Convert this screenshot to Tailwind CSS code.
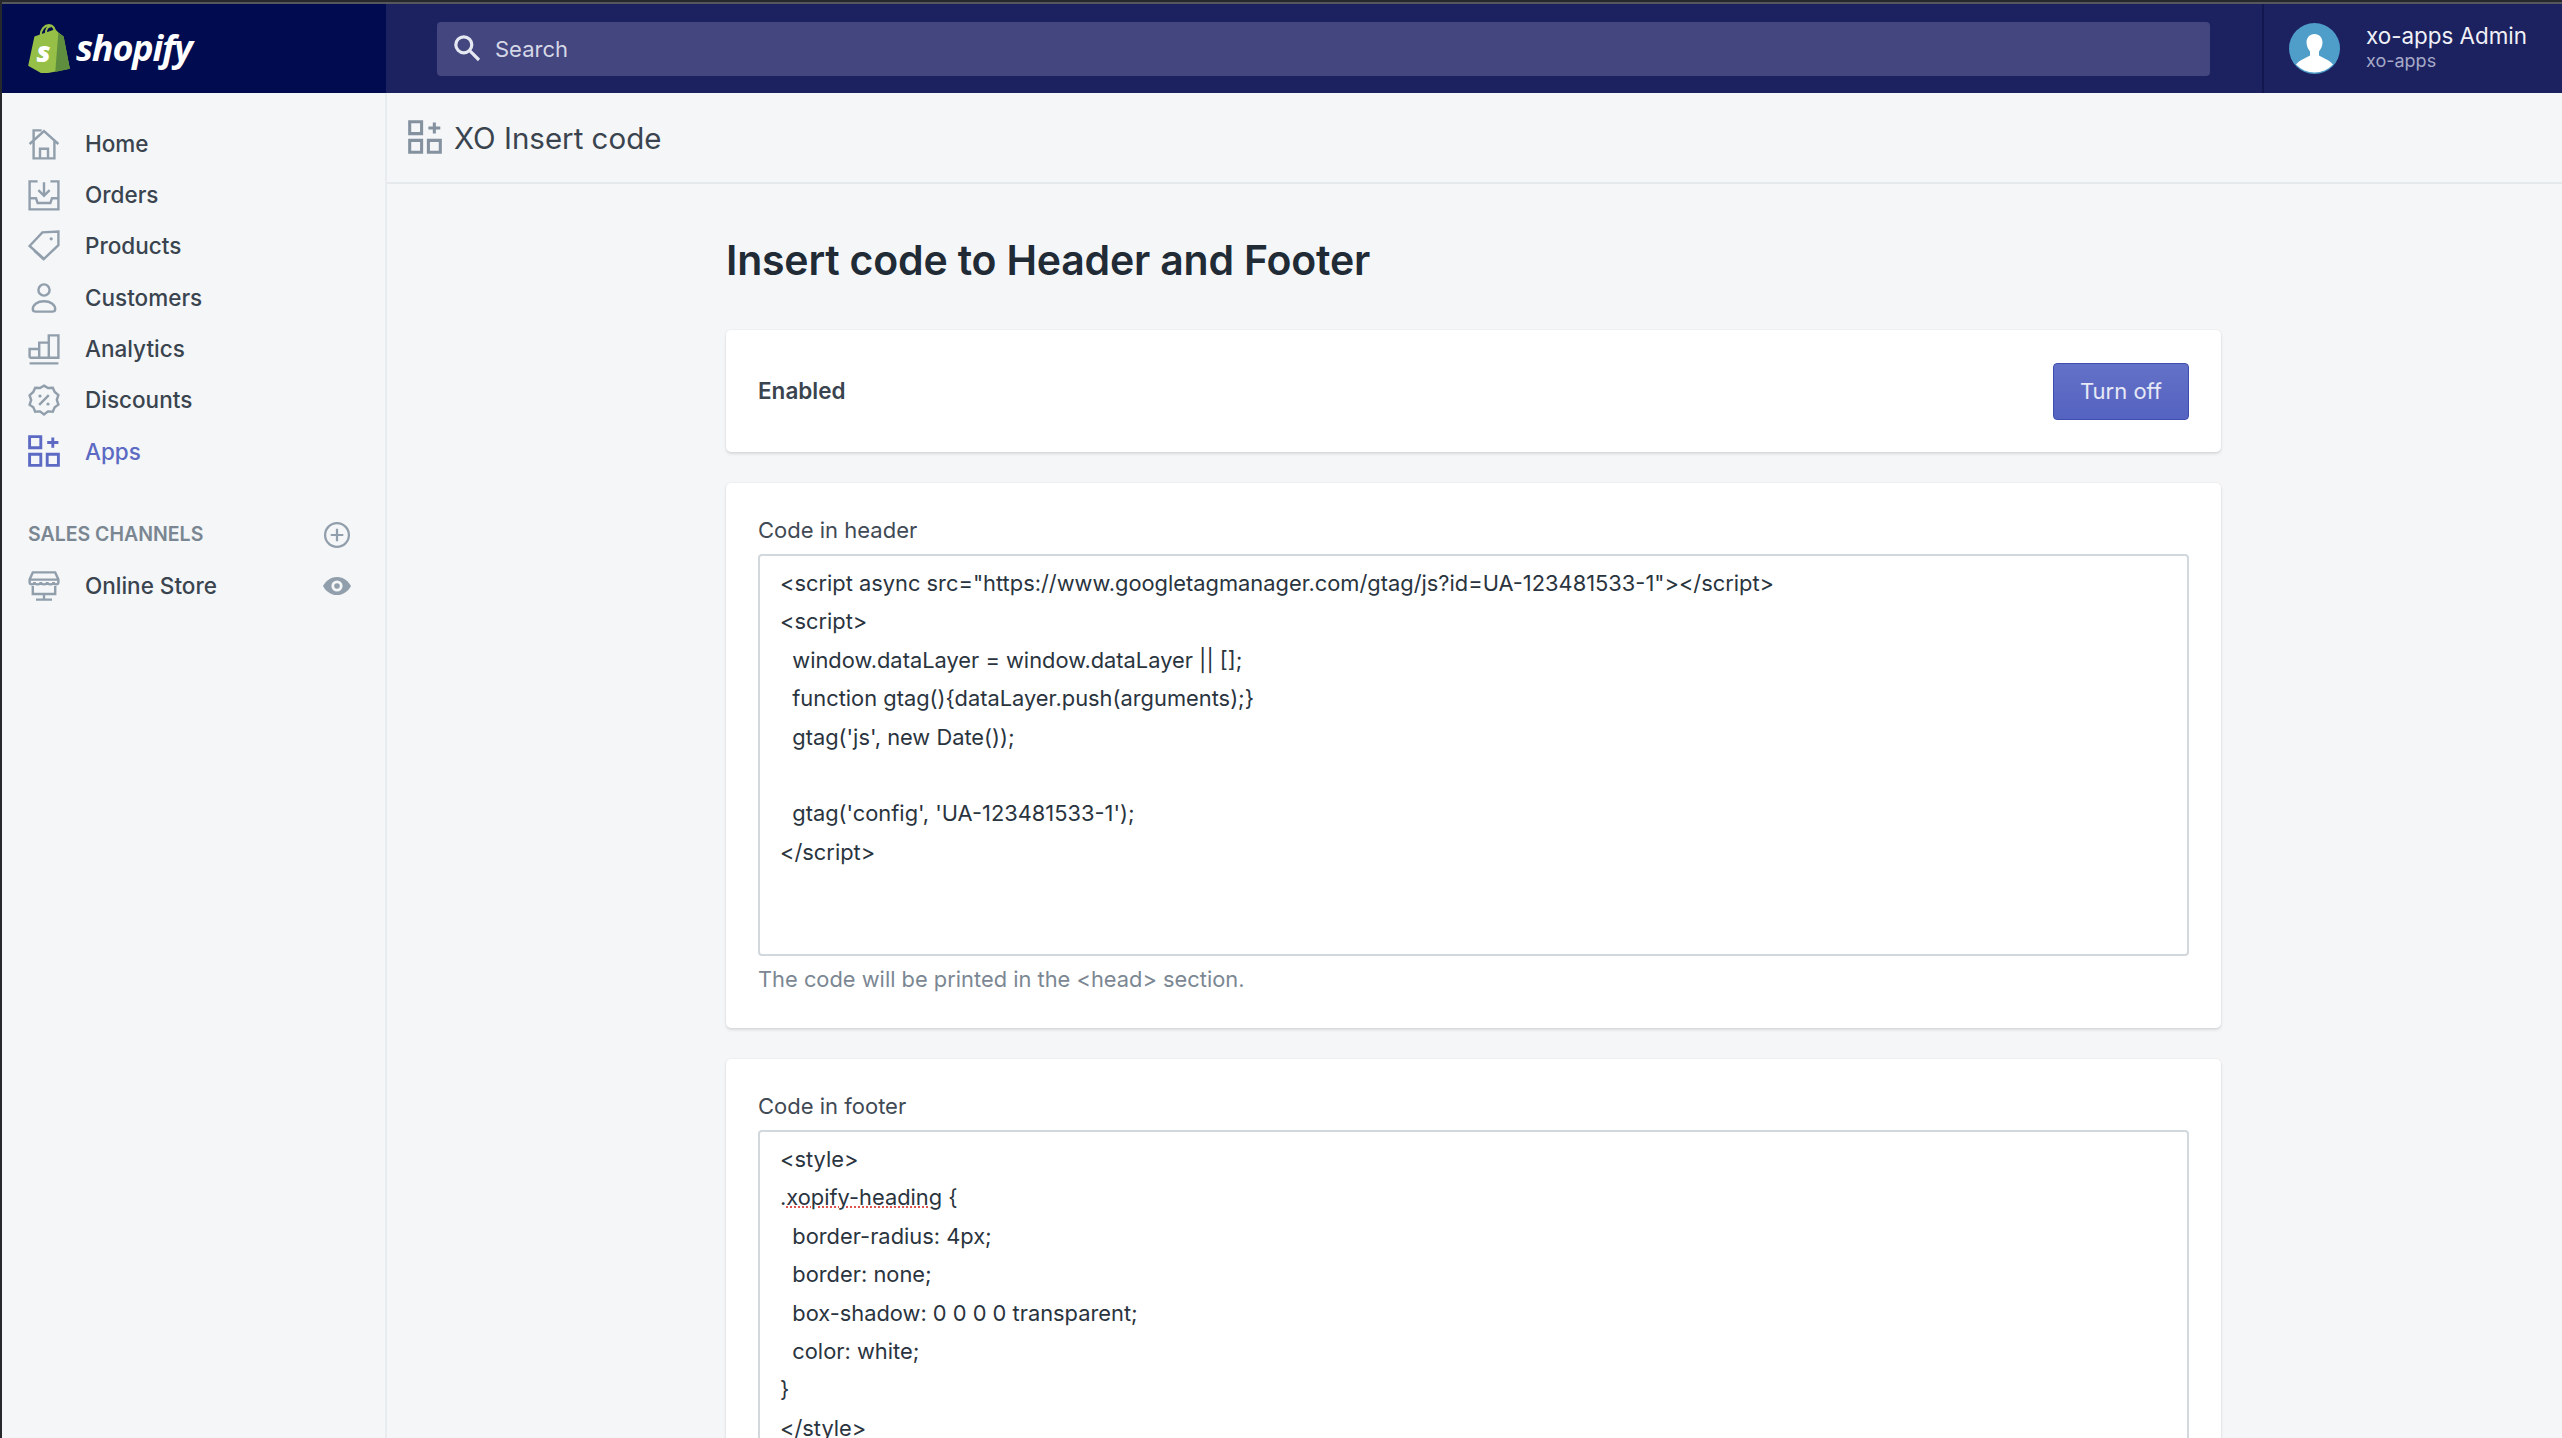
<!DOCTYPE html>
<html lang="en">

<head>
    <meta charset="UTF-8">
    <meta name="viewport" content="width=device-width, initial-scale=1.0">
    <title>XO Insert code</title>
    <script src="https://cdn.jsdelivr.net/npm/@tailwindcss/browser@4"></script>
</head>

<body class="h-screen overflow-hidden bg-[#f4f6f8] font-['Inter',sans-serif] text-[#212b36] border-l-2 border-[#26282c]">
    <div class="h-[4px] bg-[#55575c] border-t-2 border-[#26282c]"></div>

    <!-- Top bar -->
    <header class="flex h-[89px] bg-[#1c2260]">
        <div class="w-[384px] shrink-0 bg-[#000c4f] flex items-center pl-[25px] gap-[5px]">
            <svg class="w-[44px] h-[50px] mb-[2px]" viewBox="0 0 42 48">
                <path d="M1 41 7 13l20-7 3 3 5 4 6 31-26 5Z" fill="#95bf47" />
                <path d="M30 9l5 4 6 31-14 3 3-38Z" fill="#5e8e3e" />
                <path d="M13 12c0-6 4-10 8-10s6 4 6 10M18 10c0-4 2-7 5-7" fill="none" stroke="#95bf47" stroke-width="2" />
                <text x="9" y="37" font-family="Open Sans" font-weight="800" font-style="italic" font-size="27" fill="#fff">s</text>
            </svg>
            <span class="font-['Open_Sans'] italic font-bold text-[36px] leading-none text-white tracking-[-1.2px] mb-[2px]">shopify</span>
        </div>
        <div class="flex-1 flex items-center pl-[51px] pr-[52px]">
            <div class="flex-1 h-[54px] rounded-[4px] bg-[#43467f] flex items-center pl-[14px] gap-[12px]">
                <svg class="w-[32px] h-[32px] text-[#e6e8f2] mb-[2px]" viewBox="0 0 20 20" fill="none" stroke="currentColor" stroke-width="2">
                    <circle cx="8" cy="8" r="5" />
                    <path d="m12 12 5.500 5.500" />
                </svg>
                <span class="text-[22px] text-[#d5d7e6] mt-[2px]">Search</span>
            </div>
        </div>
        <div class="w-[300px] shrink-0 border-l-2 border-[#12184f] flex items-center pl-[25px] gap-[26px]">
            <svg class="w-[51px] h-[51px]" viewBox="0 0 51 51">
                <circle cx="25.5" cy="25.5" r="25.5" fill="#4f9dc9" />
                <path d="M25.5 11c5 0 8 4 8 8.500 0 4-2 7-3.500 9v4c3 2 10 4 14 9a25.500 25.500 0 0 1-37 0c4-5 11-7 14-9v-4c-1.500-2-3.500-5-3.500-9 0-4.500 3-8.500 8-8.500Z" fill="#fff" />
            </svg>
            <div class="text-[22.4px] leading-[26px] mb-[1px]">
                <div class="text-[#f0f1f7]">xo-apps Admin</div>
                <div class="text-[18px] leading-[24px] text-[#a6a9c8]">xo-apps</div>
            </div>
        </div>
    </header>

    <div class="flex h-[1345px]">
        <!-- Sidebar -->
        <nav class="w-[385px] shrink-0 border-r-2 border-[#e9ecef] pt-[25px] text-[22.5px] font-medium text-[#3a444f]">
            <a class="flex items-center h-[51.3px] pl-[26px] gap-[25px]">
                <svg class="w-[32px] h-[32px] text-[#919eab]" viewBox="0 0 20 20" fill="none" stroke="currentColor" stroke-width="1.500">
                    <path d="M1 10 10 2l9 8M3.500 8v11h13V8M7.500 19v-6h5v6M3.500 8V1.500h5" />
                </svg>
                Home
            </a>
            <a class="flex items-center h-[51.3px] pl-[26px] gap-[25px]">
                <svg class="w-[32px] h-[32px] text-[#919eab]" viewBox="0 0 20 20" fill="none" stroke="currentColor" stroke-width="1.500">
                    <path d="M6 1.500H1V19h18V1.500h-5M1 12h4l1 3h8l1-3h4M10 2v8M6.500 7l3.500 3.500L13.500 7" />
                </svg>
                Orders
            </a>
            <a class="flex items-center h-[51.3px] pl-[26px] gap-[25px]">
                <svg class="w-[32px] h-[32px] text-[#919eab]" viewBox="0 0 20 20" fill="none" stroke="currentColor" stroke-width="1.500">
                    <path d="M19 1v8.500L10 18 1 10l8-8.500L19 1ZM4 13l6 5.500" />
                    <circle cx="14.500" cy="5.500" r="1" fill="currentColor" stroke="none" />
                </svg>
                Products
            </a>
            <a class="flex items-center h-[51.3px] pl-[26px] gap-[25px]">
                <svg class="w-[32px] h-[32px] text-[#919eab]" viewBox="0 0 20 20" fill="none" stroke="currentColor" stroke-width="1.500">
                    <circle cx="10" cy="5" r="3.500" />
                    <path d="M3 17c0-3 3-5 7-5s7 2 7 5c0 1-1 1.500-2 1.500H5c-1 0-2-.5-2-1.500Z" />
                </svg>
                Customers
            </a>
            <a class="flex items-center h-[51.3px] pl-[26px] gap-[25px]">
                <svg class="w-[32px] h-[32px] text-[#919eab]" viewBox="0 0 20 20" fill="none" stroke="currentColor" stroke-width="1.500">
                    <path d="M1 15.500V10h6v5.500M7 15.500V6h6v9.500M13 15.500V1.500h6v14H1M1 19h18" />
                </svg>
                Analytics
            </a>
            <a class="flex items-center h-[51.3px] pl-[26px] gap-[25px]">
                <svg class="w-[32px] h-[32px] text-[#919eab]" viewBox="0 0 20 20" fill="none" stroke="currentColor" stroke-width="1.500">
                    <path d="m10 1 2.500 1.500 3-.2 1.200 2.700 2.300 2-1 2.900 1 3-2.300 1.600-1.200 2.800-3-.2L10 19l-2.500-1.900-3 .2-1.200-2.800L1 13l1-3-1-2.900L3.300 5l1.200-2.700 3 .2L10 1Z" />
                    <path d="m7 13 6-6" />
                    <circle cx="7.500" cy="7.500" r="1" fill="currentColor" stroke="none" />
                    <circle cx="12.500" cy="12.500" r="1" fill="currentColor" stroke="none" />
                </svg>
                Discounts
            </a>
            <a class="flex items-center h-[51.3px] pl-[26px] gap-[25px] text-[#5c6ac4]">
                <svg class="w-[32px] h-[32px]" viewBox="0 0 20 20" fill="none" stroke="currentColor" stroke-width="1.800">
                    <path d="M1 1h7v7H1zM1 12h7v7H1zM12 12h7v7h-7zM15.500 1.500v6.500M12 4.700h7" />
                </svg>
                Apps
            </a>
            <div class="flex items-center justify-between h-[51px] mt-[32px] pl-[26px] pr-[34px] text-[19.5px] font-semibold text-[#7a8691]">
                <span>SALES CHANNELS</span>
                <svg class="w-[28px] h-[28px] text-[#919eab]" viewBox="0 0 20 20" fill="none" stroke="currentColor" stroke-width="1.600">
                    <circle cx="10" cy="10" r="8.500" />
                    <path d="M10 5.500v9M5.500 10h9" />
                </svg>
            </div>
            <a class="flex items-center h-[51.3px] pl-[26px] pr-[34px] gap-[25px]">
                <svg class="w-[32px] h-[32px] text-[#919eab]" viewBox="0 0 20 20" fill="none" stroke="currentColor" stroke-width="1.500">
                    <path d="M3 1.500h14L19 6v1.500c0 2-3 2-3 0 0 2-4 2-4 0 0 2-4 2-4 0 0 2-4 2-4 0 0 2-3 2-3 0V6l2-4.500ZM3 10v5h14v-5M1 6h18M5 18.500h10M10 15v3" />
                </svg>
                <span class="flex-1">Online Store</span>
                <svg class="w-[28px] h-[28px] text-[#919eab]" viewBox="0 0 20 20">
                    <path fill="currentColor" fill-rule="evenodd" d="M10 3.500c5 0 8.500 3.500 10 6.500-1.500 3-5 6.500-10 6.500S1.500 13 0 10c1.500-3 5-6.500 10-6.500ZM10 6a4 4 0 1 0 0 8 4 4 0 0 0 0-8Zm0 2a2 2 0 1 1 0 4 2 2 0 0 1 0-4Z" />
                </svg>
            </a>
        </nav>

        <!-- Main -->
        <main class="flex-1">
            <div class="h-[91px] border-b-2 border-[#e6e9ec] flex items-center pl-[21px] gap-[12px] text-[29.5px] text-[#3a444f]">
                <svg class="w-[34px] h-[34px] text-[#84919e] mb-[2px]" viewBox="0 0 20 20" fill="none" stroke="currentColor" stroke-width="1.800">
                    <path d="M1 1h7v7H1zM1 12h7v7H1zM12 12h7v7h-7zM15.500 1.500v6.500M12 4.700h7" />
                </svg>
                <span class="mt-[2px]">XO Insert code</span>
            </div>

            <div class="w-[1495px] ml-[339px]">
                <h1 class="h-[146px] pt-[48px] text-[41px] leading-[56px] font-semibold text-[#212b36] tracking-[-0.2px]">Insert code to Header and Footer</h1>

                <section class="h-[122px] bg-white rounded-[5px] shadow-[0_0_0_1px_rgba(63,63,68,0.03),0_2px_3px_rgba(63,63,68,0.14)] flex items-center justify-between px-[32px] mb-[31px]">
                    <span class="text-[22.5px] font-semibold text-[#3a444f]">Enabled</span>
                    <button class="w-[136px] h-[57px] rounded-[4px] bg-gradient-to-b from-[#6371c7] to-[#5563c1] border border-[#3f4eae] text-[22px] text-white/85">Turn off</button>
                </section>

                <section class="h-[545px] bg-white rounded-[5px] shadow-[0_0_0_1px_rgba(63,63,68,0.03),0_2px_3px_rgba(63,63,68,0.14)] px-[32px] pt-[33px] mb-[31px]">
                    <div class="h-[38px] text-[22px] leading-[28px] text-[#3f4a55]">Code in header</div>
                    <div class="h-[402px] border-2 border-[#d3d8dd] rounded-[4px] pl-[20px] pt-[8px] text-[21.85px] leading-[38.4px] text-[#2a343e] whitespace-pre">&lt;script async src="https://www.googletagmanager.com/gtag/js?id=UA-123481533-1"&gt;&lt;/script&gt;
&lt;script&gt;
  window.dataLayer = window.dataLayer || [];
  function gtag(){dataLayer.push(arguments);}
  gtag('js', new Date());

  gtag('config', 'UA-123481533-1');
&lt;/script&gt;</div>
                    <div class="mt-[9px] text-[21.85px] leading-[28px] text-[#7b8793]">The code will be printed in the &lt;head&gt; section.</div>
                </section>

                <section class="h-[600px] bg-white rounded-[5px] shadow-[0_0_0_1px_rgba(63,63,68,0.03),0_2px_3px_rgba(63,63,68,0.14)] px-[32px] pt-[33px]">
                    <div class="h-[38px] text-[22px] leading-[28px] text-[#3f4a55]">Code in footer</div>
                    <div class="h-[402px] border-2 border-[#d3d8dd] rounded-[4px] pl-[20px] pt-[8px] text-[21.85px] leading-[38.4px] text-[#2a343e]">
                        <div class="whitespace-pre">&lt;style&gt;</div>
                        <div class="whitespace-pre">.<span class="underline decoration-dotted decoration-[#e0544f] decoration-2">xopify-heading</span> {</div>
                        <div class="whitespace-pre">  border-radius: 4px;</div>
                        <div class="whitespace-pre">  border: none;</div>
                        <div class="whitespace-pre">  box-shadow: 0 0 0 0 transparent;</div>
                        <div class="whitespace-pre">  color: white;</div>
                        <div class="whitespace-pre">}</div>
                        <div class="whitespace-pre">&lt;/style&gt;</div>
                    </div>
                </section>
            </div>
        </main>
    </div>
</body>

</html>
